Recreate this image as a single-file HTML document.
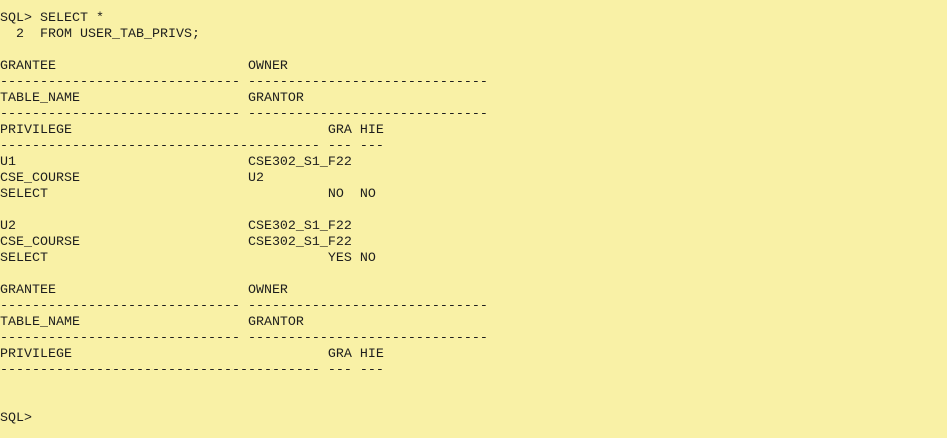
<!DOCTYPE html>
<html><head><style>
html,body{margin:0;padding:0;}
body{width:947px;height:438px;background:#f9f1a6;overflow:hidden;}
pre{margin:0;padding:11px 0 0 0;font-family:"Liberation Mono",monospace;font-size:13.33px;line-height:16px;color:#1e1e1e;}
</style></head><body><pre>SQL&gt; SELECT *
  2  FROM USER_TAB_PRIVS;

GRANTEE                        OWNER
------------------------------ ------------------------------
TABLE_NAME                     GRANTOR
------------------------------ ------------------------------
PRIVILEGE                                GRA HIE
---------------------------------------- --- ---
U1                             CSE302_S1_F22
CSE_COURSE                     U2
SELECT                                   NO  NO

U2                             CSE302_S1_F22
CSE_COURSE                     CSE302_S1_F22
SELECT                                   YES NO

GRANTEE                        OWNER
------------------------------ ------------------------------
TABLE_NAME                     GRANTOR
------------------------------ ------------------------------
PRIVILEGE                                GRA HIE
---------------------------------------- --- ---


SQL&gt;</pre></body></html>
